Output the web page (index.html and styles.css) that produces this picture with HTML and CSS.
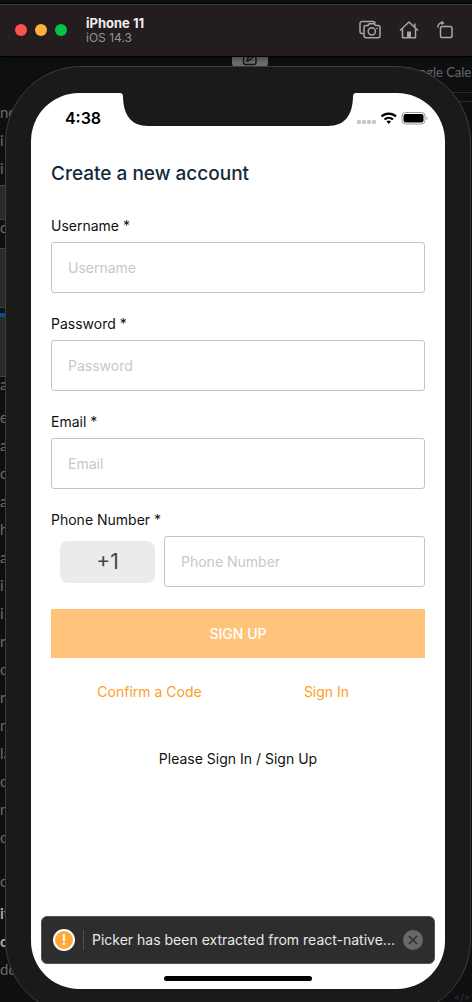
FILE: index.html
```html
<!DOCTYPE html>
<html lang="en">
<head>
<meta charset="utf-8">
<meta name="viewport" content="width=device-width, initial-scale=1">
<title>iPhone 11 – iOS 14.3</title>
<link rel="stylesheet" href="styles.css">
</head>
<body>
<div class="desktop">
  <div class="backdrop" aria-hidden="true">
    <div class="backdrop-left">
      <span>ne</span><span>i</span><span>i</span>
      <i class="block block-short"></i>
      <span class="tight">c</span>
      <i class="block"></i>
      <i class="block block-active"></i>
      <span class="tight">a</span>
      <span>e</span><span>a</span><span>o</span><span>a</span><span>h</span><span>a</span><span>i</span><span>i</span><span>r</span><span>c</span><span>r</span><span>n</span><span>la</span><span>o</span><span>n</span><span>c</span>
      <span class="section">os</span>
      <b>it</b><b>c</b><span>do</span>
    </div>
    <div class="backdrop-right">
      <span>Google Cale</span>
      <hr><hr>
    </div>
    <div class="compose">
      <svg width="16" height="16" viewBox="0 0 16 16"><rect x="1.500" y="2" width="12.500" height="12.500" rx="2"/><path d="M5 11l1-3 6.500-6.500 2 2L8 10z"/></svg>
    </div>
    <div class="code-mark">&lt;/&gt;</div>
  </div>

  <header class="titlebar">
    <div class="lights"><button class="light red" aria-label="Close"></button><button class="light amber" aria-label="Minimize"></button><button class="light green" aria-label="Zoom"></button></div>
    <div class="device"><strong>iPhone 11</strong><span>iOS 14.3</span></div>
    <div class="tools">
      <button aria-label="Screenshot">
        <svg width="22" height="20" viewBox="0 0 22 20"><path d="M4.500 13.500H3a2 2 0 0 1-2-2V3.500a2 2 0 0 1 2-2H14a2 2 0 0 1 2 2"/><path d="M7 5.500h2l1.300-1.700h4.900l1.300 1.700H19a2 2 0 0 1 2 2v8.300a2 2 0 0 1-2 2H7a2 2 0 0 1-2-2V7.500a2 2 0 0 1 2-2z"/><circle cx="12.800" cy="11.300" r="3.600"/><circle class="dot" cx="18" cy="8.500" r=".8"/></svg>
      </button>
      <button aria-label="Home">
        <svg width="20" height="20" viewBox="0 0 20 20"><path d="M1 10.500 10 2l9 8.500M3.500 9v8.700h13V9M15.800 7V3.500"/><path class="solid" d="M8 17.500v-6h4v6z"/></svg>
      </button>
      <button aria-label="Rotate">
        <svg width="18" height="20" viewBox="0 0 18 20"><rect x="3.500" y="6.500" width="11.500" height="11" rx="1.800"/><path d="M.8 7.500C.8 4.500 2.500 2.800 5.800 2.800"/><path class="solid" d="M4.500.500 7.500 2.900 4.500 5.300z"/></svg>
      </button>
    </div>
  </header>

  <div class="phone">
    <div class="screen">
      <div class="statusbar">
        <time>4:38</time>
        <svg class="notch" width="236" height="33" viewBox="0 0 236 33"><path d="M0 0C2 0 3 1 3 4 3.500 22 11 33 28 33H208C225 33 232.500 22 233 4 233 1 234 0 236 0z"/></svg>
        <svg class="signals" width="72" height="16" viewBox="0 0 72 16">
          <g fill="#c8c8ca"><rect x="0" y="10" width="4" height="4" rx="1"/><rect x="5" y="10" width="4" height="4" rx="1"/><rect x="10" y="10" width="4" height="4" rx="1"/><rect x="15" y="10" width="4" height="4" rx="1"/></g>
          <g fill="none" stroke="#000" stroke-width="2.200"><path d="M24.500 6.500a10.500 10.500 0 0 1 14.500 0M27.500 9.500a6.300 6.300 0 0 1 8.500 0"/></g>
          <path d="M29.500 11.500a3.500 3.500 0 0 1 4.500 0l-2.250 2.500z"/>
          <rect x="45" y="2.500" width="23" height="11.500" rx="3.500" fill="#fff" stroke="#999"/><rect x="46.500" y="4" width="20" height="8.500" rx="2"/><path d="M69.500 6.200q2 2 0 4z" fill="#999"/>
        </svg>
      </div>

      <main>
        <h1>Create a new account</h1>
        <form>
          <div class="field"><label for="username">Username *</label><input id="username" type="text" placeholder="Username"></div>
          <div class="field"><label for="password">Password *</label><input id="password" type="password" placeholder="Password"></div>
          <div class="field"><label for="email">Email *</label><input id="email" type="email" placeholder="Email"></div>
          <div class="field"><label for="phone">Phone Number *</label>
            <div class="phone-row">
              <select aria-label="Country code"><option>+1</option></select>
              <input id="phone" type="tel" placeholder="Phone Number">
            </div>
          </div>
          <button class="submit" type="submit">SIGN UP</button>
        </form>
        <nav><a href="#confirm">Confirm a Code</a><a href="#signin">Sign In</a></nav>
        <p>Please Sign In / Sign Up</p>
      </main>

      <div class="toast" role="status">
        <span class="warn">!</span>
        <span class="message">Picker has been extracted from react-native...</span>
        <button aria-label="Dismiss"><svg width="20" height="20" viewBox="0 0 20 20"><circle cx="10" cy="10" r="10"/><path d="m6 6 8 8m0-8-8 8"/></svg></button>
      </div>
      <div class="home-indicator"></div>
    </div>
  </div>
</div>
</body>
</html>
```
FILE: styles.css
```css
* { box-sizing: border-box; }

body {
  margin: 0;
  background: #101113;
  font-family: Inter, "Liberation Sans", sans-serif;
  font-size: 14px;
  line-height: 20px;
  color: #111;
}

button { border: 0; padding: 0; background: none; font: inherit; }

.desktop {
  position: relative;
  display: flex;
  flex-direction: column;
  min-height: 100vh;
  overflow: hidden;
  background: #0e0f11;
}

/* Dimmed windows behind the simulator */
.backdrop {
  position: absolute;
  inset: 0;
  overflow: hidden;
  font-family: Lato, sans-serif;
  font-size: 15px;
  color: #6a6b6d;
}
.backdrop-left {
  display: flex;
  flex-direction: column;
  padding-top: 98px;
  line-height: 28px;
}
.backdrop-left b { color: #aaa; }
.backdrop-left .tight { line-height: 14px; height: 14px; }
.backdrop-left .section { margin-top: 16px; margin-bottom: 4px; }
.block {
  width: 8px;
  height: 60px;
  margin-top: 14px;
  background: #292a2a;
  border: 1px solid #444;
  border-left: 0;
}
.block-short { height: 35px; margin-top: 3px; }
.block-active { height: 64px; margin-top: 5px; border-top: 4px solid #07508b; }
.block-active + .tight { margin-bottom: 12px; }
.backdrop-right {
  position: absolute;
  top: 57px;
  right: 0;
  width: 70px;
  color: #66686b;
  white-space: nowrap;
  line-height: 28px;
}
.backdrop-right span { font-size: 13px; }
.backdrop-right hr { margin: 6px 0 8px; border: 0; border-top: 1px solid #2a2b2d; }
.compose {
  position: absolute;
  top: 50px;
  left: 232px;
  width: 36px;
  height: 17px;
  text-align: center;
  line-height: 16px;
  background: #6e6e70;
  border-radius: 4px;
}
.compose svg { fill: none; stroke: #161616; stroke-width: 1.5; }
.code-mark { position: absolute; right: 2px; bottom: 0; font-size: 10px; line-height: 10px; color: #3c3d40; }

/* Simulator title bar */
.titlebar {
  position: relative;
  display: flex;
  align-items: center;
  height: 54px;
  margin-top: 3px;
  padding: 0 17px 0 15px;
  background: #231d20;
  border-top: 1px solid #000;
  border-bottom: 1px solid #000;
  box-shadow: inset 0 1px #3d383a, 0 2px 6px #0006;
}
.lights { display: flex; gap: 8px; }
.light { width: 12px; height: 12px; border-radius: 50%; }
.red { background: #ff5150; }
.amber { background: #ffb03d; }
.green { background: #04c543; }
.device { display: flex; flex-direction: column; margin-left: 19px; line-height: 14px; }
.device strong { font-size: 13px; font-weight: 700; color: #f2eff0; line-height: 15px; }
.device span { font-size: 12px; color: #989194; }
.tools { display: flex; gap: 18px; margin-left: auto; }
.tools button { display: flex; }
.tools svg { fill: none; stroke: #aaa4a6; stroke-width: 1.5; stroke-linejoin: round; }
.tools .dot, .tools .solid { fill: #aaa4a6; stroke: none; }

/* Handset */
.phone {
  position: relative;
  flex: 1;
  display: flex;
  margin: 9px 1px -14px 5px;
  padding: 26px 25px;
  background: #1a1a1a;
  border: 1px solid #3c3c3c;
  border-radius: 76px;
}
.screen {
  flex: 1;
  min-width: 0;
  display: flex;
  flex-direction: column;
  background: #fff;
  border-radius: 48px;
}
.statusbar {
  display: grid;
  grid-template-columns: 1fr 236px 1fr;
  align-items: center;
  height: 49px;
}
.statusbar time { padding-left: 15px; text-align: center; font-size: 16px; font-weight: 600; color: #000; }
.notch { align-self: start; fill: #1a1a1a; }
.signals { justify-self: end; margin-right: 16px; }

main { padding: 0 20px; }
h1 {
  margin: 20px 0 30px;
  font-size: 19px;
  font-weight: 500;
  line-height: 24px;
  color: #152939;
}
.field { display: flex; flex-direction: column; gap: 6px; margin-bottom: 21px; }
.field input {
  width: 100%;
  min-width: 0;
  height: 51px;
  padding: 0 16px;
  font: inherit;
  color: #111;
  background: #fff;
  border: 1px solid #c4c4c4;
  border-radius: 3px;
}
.field input::placeholder { color: #c7c7cd; opacity: 1; }
.phone-row { display: flex; align-items: center; gap: 9px; padding-left: 9px; }
.phone-row select {
  flex: 0 0 95px;
  height: 42px;
  appearance: none;
  text-align: center;
  text-align-last: center;
  font: inherit;
  font-size: 21px;
  color: #444;
  background: #ebebec;
  border: 0;
  border-radius: 8px;
}
form { display: flex; flex-direction: column; }
.submit {
  height: 49px;
  margin-top: 1px;
  font-weight: 500;
  color: #fff;
  background: #ffc37b;
}
nav { display: grid; grid-template-columns: 1fr 1fr; padding: 24px 10px 0; text-align: center; }
nav a { color: #ff9c28; text-decoration: none; }
main p { margin: 47px 0 20px; text-align: center; color: #111; }

.toast {
  display: flex;
  align-items: center;
  height: 48px;
  margin: auto 10px 12px;
  padding: 0 11px;
  background: #2d2d2d;
  border: 1px solid #555;
  border-radius: 6px;
}
.warn {
  flex: none;
  width: 22px;
  height: 22px;
  border: 2px solid #fff;
  border-radius: 50%;
  background: #ffa937;
  color: #fff;
  font-weight: 600;
  line-height: 18px;
  text-align: center;
}
.message {
  flex: 1;
  min-width: 0;
  margin: 0 4px 0 8px;
  padding-left: 8px;
  border-left: 1px solid #505050;
  color: #e8e8e8;
  white-space: nowrap;
}
.toast button { display: flex; }
.toast circle { fill: #686868; }
.toast path { stroke: #2d2d2d; stroke-width: 1.5; }
.home-indicator {
  width: 148px;
  height: 5px;
  margin: 0 auto 8px;
  background: #000;
  border-radius: 3px;
}
```
